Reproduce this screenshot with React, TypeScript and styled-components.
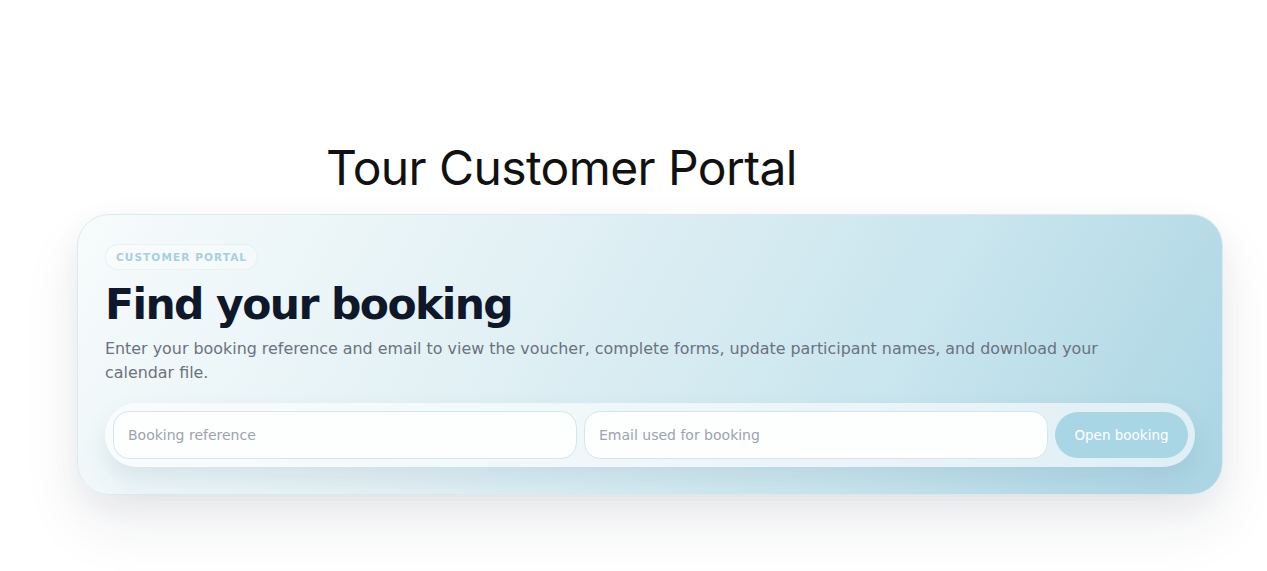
import React from 'react'
import styled, { createGlobalStyle } from 'styled-components'

const cardFont = `"DejaVu Sans", "Noto Sans", sans-serif`

const GlobalStyle = createGlobalStyle`
    html, body {
        margin : 0;
        padding : 0;
        background : #ffffff;
    }
    body {
        font-family : ${cardFont};
    }
`

const Page = styled.div`
    width : 1267px;
    height : 571px;
    box-sizing : border-box;
    padding : 140px 45px 0 77px;
    overflow : hidden;
`

const Title = styled.h1`
    margin : 0 0 18px 249px;
    font-family : Inter, "Liberation Sans", sans-serif;
    font-weight : 400;
    font-size : 48px;
    line-height : 56px;
    letter-spacing : -0.6px;
    color : #111111;
`

const Card = styled.section`
    box-sizing : border-box;
    width : 1146px;
    height : 281px;
    padding : 29px 27px 0 27px;
    border-radius : 32px;
    border : 1px solid #dde9ee;
    background : linear-gradient(120deg, #f7fbfc 0%, #e3f1f5 35%, #c9e5ee 70%, #aad5e3 100%);
    box-shadow : 0 30px 60px rgba(20, 40, 60, 0.08), 0 10px 30px rgba(20, 40, 60, 0.05);
`

const Pill = styled.span`
    display : inline-block;
    padding : 6px 10px 6px 10px;
    border-radius : 999px;
    background : rgba(255, 255, 255, 0.35);
    border : 1px solid rgba(230, 240, 244, 0.9);
    font-size : 10.5px;
    font-weight : 700;
    letter-spacing : 1.1px;
    color : #a6d0dd;
`

const Heading = styled.h2`
    margin : 9px 0 6px 0;
    font-family : ${cardFont};
    font-weight : 700;
    font-size : 42.5px;
    line-height : 52px;
    letter-spacing : -1.6px;
    color : #0f172a;
`

const Lead = styled.p`
    margin : 0 0 18px 0;
    max-width : 1010px;
    font-size : 15.9px;
    line-height : 24px;
    color : #6b7280;
`

const Form = styled.form`
    display : flex;
    align-items : center;
    gap : 7px;
    box-sizing : border-box;
    width : 1090px;
    height : 64px;
    padding : 0 7px 0 8px;
    border-radius : 999px;
    background : rgba(255, 255, 255, 0.6);
    box-shadow : 0 12px 24px rgba(60, 110, 130, 0.12);
`

const Field = styled.input`
    box-sizing : border-box;
    flex : 1;
    height : 48px;
    padding : 0 14px;
    border-radius : 16px;
    border : 1px solid #d6e5ec;
    background : #fdfefe;
    font-family : ${cardFont};
    font-size : 14px;
    color : #111827;
    outline : none;

    &::placeholder {
        color : #9ca3af;
    }
`

const Button = styled.button`
    box-sizing : border-box;
    width : 133px;
    height : 46px;
    border : none;
    border-radius : 999px;
    background : #a9d6e4;
    color : #ffffff;
    font-family : ${cardFont};
    font-size : 13.5px;
    cursor : pointer;
`

const App = () => {
    return (
        <>
            <GlobalStyle />
            <Page>
                <Title>Tour Customer Portal</Title>
                <Card>
                    <Pill>CUSTOMER PORTAL</Pill>
                    <Heading>Find your booking</Heading>
                    <Lead>
                        Enter your booking reference and email to view the voucher, complete forms, update participant names, and download your calendar file.
                    </Lead>
                    <Form onSubmit={e => e.preventDefault()}>
                        <Field placeholder='Booking reference' />
                        <Field placeholder='Email used for booking' />
                        <Button type='submit'>Open booking</Button>
                    </Form>
                </Card>
            </Page>
        </>
    )
}

export default App
